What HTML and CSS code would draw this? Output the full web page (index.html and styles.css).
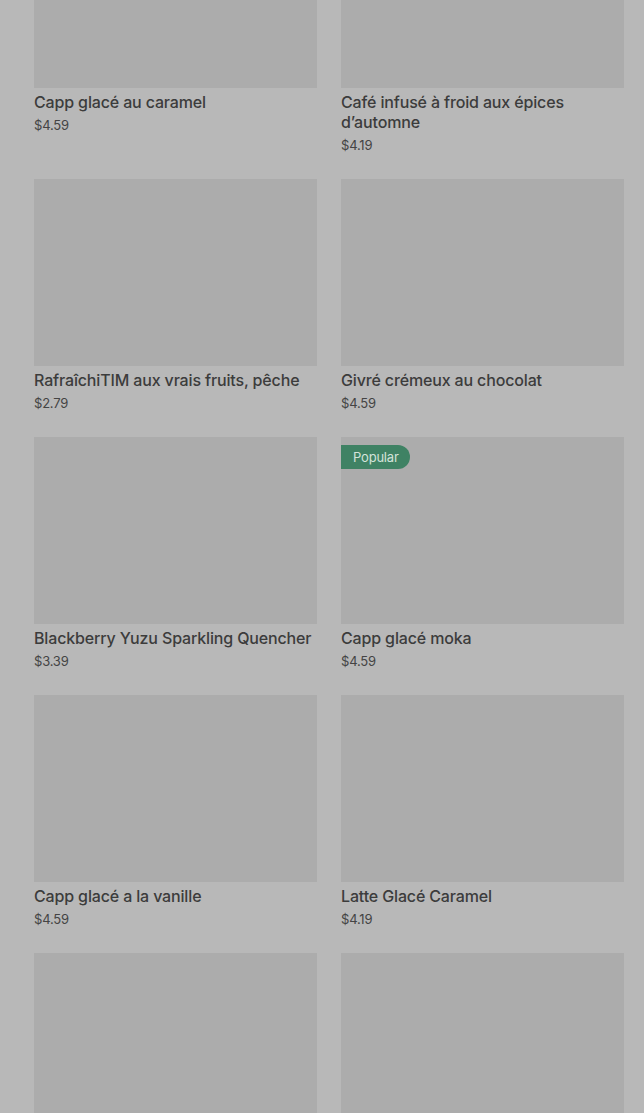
FILE: index.html
```html
<!DOCTYPE html>
<html lang="fr">
<head>
<meta charset="utf-8">
<link rel="stylesheet" href="styles.css">
</head>
<body>
<main class="menu">
  <div class="grid">
    <article class="card"><div class="thumb"></div><h3 class="name">Capp glacé au caramel</h3><p class="price">$4.59</p></article>
    <article class="card"><div class="thumb"></div><h3 class="name">Café infusé à froid aux épices d’automne</h3><p class="price">$4.19</p></article>
    <article class="card"><div class="thumb"></div><h3 class="name">RafraîchiTIM aux vrais fruits, pêche</h3><p class="price">$2.79</p></article>
    <article class="card"><div class="thumb"></div><h3 class="name">Givré crémeux au chocolat</h3><p class="price">$4.59</p></article>
    <article class="card"><div class="thumb"></div><h3 class="name">Blackberry Yuzu Sparkling Quencher</h3><p class="price">$3.39</p></article>
    <article class="card"><div class="thumb"><span class="badge">Popular</span></div><h3 class="name">Capp glacé moka</h3><p class="price">$4.59</p></article>
    <article class="card"><div class="thumb"></div><h3 class="name">Capp glacé a la vanille</h3><p class="price">$4.59</p></article>
    <article class="card"><div class="thumb"></div><h3 class="name">Latte Glacé Caramel</h3><p class="price">$4.19</p></article>
    <article class="card"><div class="thumb"></div></article>
    <article class="card"><div class="thumb"></div></article>
  </div>
</main>
</body>
</html>
```
FILE: styles.css
```css
html, body {
  margin: 0;
  padding: 0;
  background: #b8b8b8;
  overflow: hidden;
  height: 1113px;
}
body {
  font-family: Inter, Roboto, "Liberation Sans", sans-serif;
  color: #3a3a3a;
}
.menu {
  padding: 0 20px 0 34px;
  margin-top: -99px;
}
.grid {
  display: grid;
  grid-template-columns: 283px 283px;
  column-gap: 24px;
  row-gap: 24px;
}
.card {
  margin: 0;
}
.thumb {
  position: relative;
  height: 187px;
  background: #acacac;
}
.badge {
  position: absolute;
  top: 8px;
  left: 0;
  height: 24px;
  line-height: 24px;
  padding: 0 11px 0 12px;
  background: #3f8264;
  color: #d3e3da;
  font-size: 13px;
  letter-spacing: -0.2px;
  border-radius: 0 12px 12px 0;
}
.name {
  margin: 4px 0 0;
  font-size: 16px;
  line-height: 20px;
  font-weight: 500;
  letter-spacing: -0.15px;
  color: #3c3c3c;
}
.price {
  margin: 3px 0 0;
  font-size: 13px;
  line-height: 20px;
  letter-spacing: -0.2px;
  color: #444;
}
```
